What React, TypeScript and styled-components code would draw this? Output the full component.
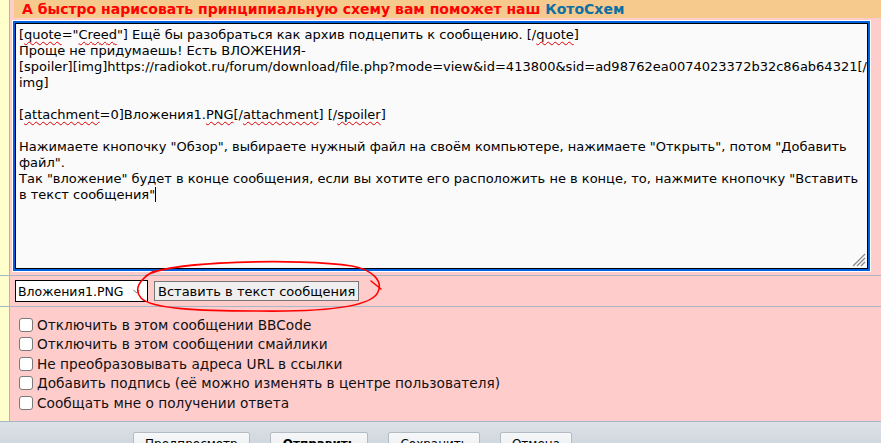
import React from 'react';
import styled, { createGlobalStyle } from 'styled-components';
import { ChevronDown } from 'lucide-react';

const GlobalStyle = createGlobalStyle`
  html, body {
    margin: 0;
    padding: 0;
    width: 881px;
    height: 443px;
    overflow: hidden;
    background: #c9d1d9;
  }
  body {
    font-family: "DejaVu Sans", Verdana, sans-serif;
    color: #000;
  }
`;

// Contenedor general
const Page = styled.div`
  position: relative;
  width: 881px;
  height: 443px;
  display: flex;
  flex-direction: column;
`;

// Tabla del formulario: columna amarilla + filas rosadas
const FormGrid = styled.div`
  display: grid;
  grid-template-columns: 9px 1fr;
  grid-template-rows: 275px 30px 114px;
  gap: 1px;
  background: #a9b6c3;
  border-bottom: 1px solid #a9b6c3;
`;

const SideCell = styled.div`
  background: #ffffcc;
`;

const Cell = styled.div`
  background: #ffcccc;
  min-width: 0;
`;

const EditorCell = styled(Cell)`
  display: flex;
  flex-direction: column;
`;

const Banner = styled.div`
  height: 18px;
  margin-left: 4px;
  padding-left: 8px;
  background: #f6c98c;
  font-weight: bold;
  font-size: 14px;
  line-height: 18px;
  color: #ff0000;
  white-space: nowrap;
`;

const BannerLink = styled.span`
  color: #0d6fa3;
`;

const Editor = styled.div`
  position: relative;
  margin: 5px 13px 0 5px;
  height: 246px;
  box-sizing: border-box;
  border: 1px solid #000;
  box-shadow: 0 0 0 2px #0060df, 0 0 0 3px #ffffff;
  background: #fafafa;
  padding: 3px 3px;
  font-size: 13px;
  line-height: 16px;
  white-space: pre;
  overflow: hidden;
`;

const EditorLine = styled.div`
  min-height: 16px;
`;

const Misspelled = styled.span`
  text-decoration: underline wavy #e00000;
  text-decoration-thickness: 1px;
  text-underline-offset: 2px;
  text-decoration-skip-ink: none;
`;

const Caret = styled.span`
  display: inline-block;
  width: 1px;
  height: 15px;
  background: #000;
  vertical-align: -3px;
`;

const Grip = styled.svg`
  position: absolute;
  right: 1px;
  bottom: 1px;
`;

const AttachRow = styled(Cell)`
  display: flex;
  align-items: center;
  gap: 6px;
  padding-left: 5px;
`;

const SelectBox = styled.div`
  box-sizing: border-box;
  width: 133px;
  height: 22px;
  border: 1px solid #000;
  background: #fff;
  display: flex;
  align-items: center;
  justify-content: space-between;
  padding: 0 5px 0 2px;
  font-size: 12.5px;
`;

const PlainButton = styled.button`
  box-sizing: border-box;
  height: 20px;
  padding: 0 3px;
  border: 1px solid #767676;
  border-radius: 0;
  background: #efefef;
  font-family: "DejaVu Sans", Verdana, sans-serif;
  font-size: 13px;
  color: #000;
`;

const OptionsCell = styled(Cell)`
  display: flex;
  flex-direction: column;
  padding: 8px 0 0 9px;
`;

const OptionLabel = styled.label`
  height: 19.5px;
  display: flex;
  align-items: center;
  gap: 4px;
  font-size: 13.7px;
  color: #111;
  white-space: nowrap;
`;

const Box = styled.span`
  box-sizing: border-box;
  width: 14px;
  height: 14px;
  border: 1px solid #7a7a7a;
  border-radius: 3px;
  background: #fff;
  flex: none;
`;

const Footer = styled.div`
  flex: 1;
  display: flex;
  align-items: flex-start;
  gap: 20px;
  padding: 10px 0 0 133px;
  background: linear-gradient(#dde2e7, #c9d1d9);
`;

const FooterButton = styled.button<{ $primary?: boolean }>`
  box-sizing: border-box;
  height: 24px;
  padding: 0 ${(p) => (p.$primary ? '12px' : '11px')};
  border: 1px solid #b3bcc5;
  border-radius: 2px;
  background: linear-gradient(#f6f7f8, #e9ecef);
  font-family: "DejaVu Sans", Verdana, sans-serif;
  font-size: 12px;
  font-weight: ${(p) => (p.$primary ? 'bold' : 'normal')};
  color: #000;
`;

const Scribble = styled.svg`
  position: absolute;
  left: 0;
  top: 0;
  pointer-events: none;
`;

const options = [
  'Отключить в этом сообщении BBCode',
  'Отключить в этом сообщении смайлики',
  'Не преобразовывать адреса URL в ссылки',
  'Добавить подпись (её можно изменять в центре пользователя)',
  'Сообщать мне о получении ответа',
];

const App: React.FC = () => {
  return (
    <>
      <GlobalStyle />
      <Page>
        <FormGrid>
          <SideCell />
          <EditorCell>
            <Banner>
              А быстро нарисовать принципиальную схему вам поможет наш <BannerLink>КотоСхем</BannerLink>
            </Banner>
            <Editor>
              <EditorLine>
                [<Misspelled>quote</Misspelled>="<Misspelled>Creed</Misspelled>"] Ещё бы разобраться как архив подцепить к сообщению. [/<Misspelled>quote</Misspelled>]
              </EditorLine>
              <EditorLine>Проще не придумаешь! Есть ВЛОЖЕНИЯ-</EditorLine>
              <EditorLine>
                [spoiler][img]https://radiokot.ru/forum/download/file.php?mode=view&amp;id=413800&amp;sid=ad98762ea0074023372b32c86ab64321[/
              </EditorLine>
              <EditorLine>img]</EditorLine>
              <EditorLine />
              <EditorLine>
                [<Misspelled>attachment</Misspelled>=0]Вложения1.<Misspelled>PNG</Misspelled>[/<Misspelled>attachment</Misspelled>] [/<Misspelled>spoiler</Misspelled>]
              </EditorLine>
              <EditorLine />
              <EditorLine>
                Нажимаете кнопочку "Обзор", выбираете нужный файл на своём компьютере, нажимаете "Открыть", потом "Добавить
              </EditorLine>
              <EditorLine>файл".</EditorLine>
              <EditorLine>
                Так "вложение" будет в конце сообщения, если вы хотите его расположить не в конце, то, нажмите кнопочку "Вставить
              </EditorLine>
              <EditorLine>
                в текст сообщения"<Caret />
              </EditorLine>
              <Grip width="14" height="14" viewBox="0 0 14 14">
                <g stroke="#8a8a8a" strokeWidth="1.2">
                  <line x1="13" y1="1" x2="1" y2="13" />
                  <line x1="13" y1="5" x2="5" y2="13" />
                  <line x1="13" y1="9" x2="9" y2="13" />
                </g>
              </Grip>
            </Editor>
          </EditorCell>

          <SideCell />
          <AttachRow>
            <SelectBox>
              <span>Вложения1.PNG</span>
              <ChevronDown size={11} strokeWidth={1.6} color="#333" />
            </SelectBox>
            <PlainButton type="button">Вставить в текст сообщения</PlainButton>
          </AttachRow>

          <SideCell />
          <OptionsCell>
            {options.map((text) => (
              <OptionLabel key={text}>
                <Box />
                {text}
              </OptionLabel>
            ))}
          </OptionsCell>
        </FormGrid>

        <Footer>
          <FooterButton type="button">Предпросмотр</FooterButton>
          <FooterButton type="button" $primary>
            Отправить
          </FooterButton>
          <FooterButton type="button">Сохранить</FooterButton>
          <FooterButton type="button">Отмена</FooterButton>
        </Footer>

        {/* Óvalo rojo dibujado a mano alrededor del botón */}
        <Scribble width="881" height="443" viewBox="0 0 881 443">
          <path
            d="M 146 276 C 165 261, 300 258, 352 266 C 373 270, 383 281, 378 292 C 372 306, 330 312, 258 311 C 198 311, 152 309, 141 298 C 134 290, 138 280, 154 271"
            fill="none"
            stroke="#ff0000"
            strokeWidth="1.6"
            strokeLinecap="round"
          />
          <path d="M 371 281 L 381 289" fill="none" stroke="#ff0000" strokeWidth="1.6" strokeLinecap="round" />
        </Scribble>
      </Page>
    </>
  );
};

export default App;
